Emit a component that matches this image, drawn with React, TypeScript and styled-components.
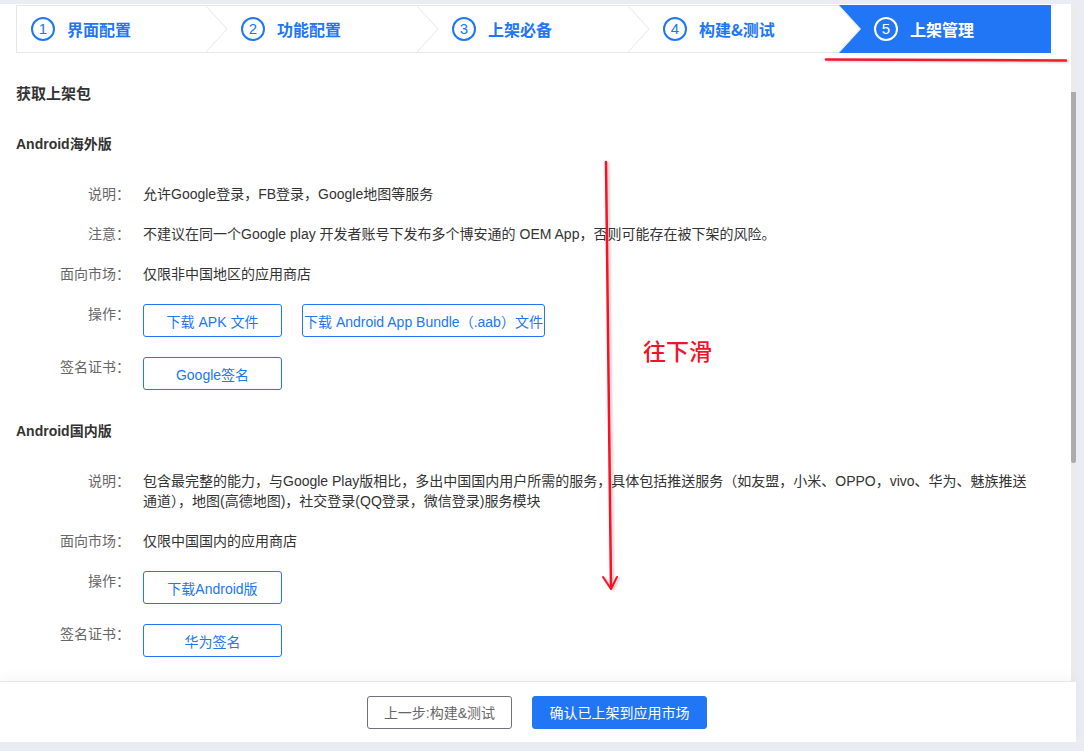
import React from 'react';
import styled, { createGlobalStyle } from 'styled-components';

const BLUE = '#2176f6';

const GlobalStyle = createGlobalStyle`
  html, body {
    margin: 0;
    padding: 0;
    background: #e9edf3;
  }
  body {
    font-family: "Liberation Sans", "Noto Sans CJK SC", sans-serif;
    color: #333;
  }
  * {
    box-sizing: border-box;
  }
`;

const Page = styled.div`
  width: 1076px;
  padding-top: 4px;
`;

const Body = styled.div`
  display: flex;
  height: 677px;
`;

const Panel = styled.div`
  position: relative;
  flex: 1;
  background: #fff;
  overflow: hidden;
  padding-top: 1px;
`;

const ScrollTrack = styled.div`
  width: 5px;
  background: #ebebeb;
  padding-top: 88px;
`;

const Thumb = styled.div`
  width: 5px;
  height: 371px;
  background: #acacac;
  border-radius: 0 0 2px 2px;
`;

const StepsBar = styled.div`
  display: flex;
  height: 48px;
  margin: 0 20px 0 16px;
  border: 1px solid #e4e7ed;
`;

const Step = styled.div<{ $active?: boolean; $first?: boolean }>`
  position: relative;
  display: flex;
  align-items: center;
  flex: ${(p) => (p.$active ? '1' : '0 0 211px')};
  padding-left: ${(p) => (p.$first ? 14 : 13)}px;
  padding-bottom: 1px;
  color: ${BLUE};

  ${(p) =>
    p.$active &&
    `
    margin: -1px -1px -1px -22px;
    padding-left: 35px;
    background: ${BLUE};
    color: #fff;
    clip-path: polygon(0 0, 100% 0, 100% 100%, 0 100%, 22px 50%);
  `}
`;

const Chevron = styled.svg`
  position: absolute;
  right: 0;
  top: 0;
  width: 22px;
  height: 100%;
`;

const StepNum = styled.span`
  width: 24px;
  height: 24px;
  border-radius: 50%;
  border: 2px solid currentColor;
  display: flex;
  align-items: center;
  justify-content: center;
  font-size: 15px;
  line-height: 1;
`;

const StepLabel = styled.span`
  margin-left: 12px;
  font-size: 16px;
  font-weight: 600;
  font-family: "Noto Sans CJK SC", "Liberation Sans", sans-serif;
`;

const Content = styled.div`
  padding: 31px 36px 0 0;
`;

const PageTitle = styled.div`
  padding-left: 16px;
  font-size: 15px;
  font-weight: 700;
  line-height: 20px;
  color: #333;
  margin-bottom: 30px;
`;

const Section = styled.div`
  padding-bottom: 11px;
`;

const SectionTitle = styled.div`
  padding-left: 16px;
  font-size: 14px;
  font-weight: 700;
  line-height: 20px;
  color: #333;
  margin-bottom: 30px;
`;

const Row = styled.div`
  display: flex;
  align-items: flex-start;
  margin-bottom: 20px;
  font-size: 14px;
  line-height: 20px;
`;

const Label = styled.div`
  flex: 0 0 130px;
  text-align: right;
  color: #666;
`;

const Value = styled.div`
  flex: 1;
  margin-left: 13px;
  color: #333;
`;

const ButtonGroup = styled.div`
  display: flex;
  gap: 20px;
`;

const OutlineButton = styled.button`
  height: 33px;
  min-width: 139px;
  padding: 0 1px;
  border: 1px solid ${BLUE};
  border-radius: 3px;
  background: #fff;
  color: ${BLUE};
  font-family: inherit;
  font-size: 14px;
  cursor: pointer;
`;

const Footer = styled.div`
  position: relative;
  z-index: 1;
  height: 60px;
  margin-top: 1px;
  background: #fff;
  display: flex;
  align-items: center;
  justify-content: center;
  gap: 20px;
  padding-right: 2px;
  box-shadow: 0 -5px 12px rgba(0, 0, 0, 0.035);
`;

const FooterButton = styled.button<{ $primary?: boolean }>`
  height: 33px;
  padding: 0 16px;
  border-radius: 3px;
  font-family: inherit;
  font-size: 14px;
  cursor: pointer;
  border: 1px solid ${(p) => (p.$primary ? BLUE : '#6f7278')};
  background: ${(p) => (p.$primary ? BLUE : '#fff')};
  color: ${(p) => (p.$primary ? '#fff' : '#666')};
  min-width: ${(p) => (p.$primary ? '175px' : '143px')};
`;

const Annotations = styled.svg`
  position: absolute;
  left: 0;
  top: 0;
  width: 1071px;
  height: 677px;
  pointer-events: none;
  z-index: 2;
  filter: drop-shadow(2px 1px 1px rgba(0, 0, 0, 0.2));
`;

const Hint = styled.div`
  position: absolute;
  left: 643px;
  top: 335px;
  z-index: 2;
  font-family: "Noto Sans CJK SC", sans-serif;
  font-size: 23px;
  font-weight: 500;
  line-height: 1;
  color: #f2132b;
`;

const steps = ['界面配置', '功能配置', '上架必备', '构建&测试', '上架管理'];

const App: React.FC = () => {
  return (
    <Page>
      <GlobalStyle />
      <Body>
        <Panel>
          <StepsBar>
            {steps.map((s, i) => {
              const active = i === steps.length - 1;
              return (
                <Step key={s} $active={active} $first={i === 0}>
                  <StepNum>{i + 1}</StepNum>
                  <StepLabel>{s}</StepLabel>
                  {!active && (
                    <Chevron viewBox="0 0 22 46" preserveAspectRatio="none">
                      <polyline points="0,0 21,23 0,46" fill="none" stroke="#e4e7ed" strokeWidth="1" />
                    </Chevron>
                  )}
                </Step>
              );
            })}
          </StepsBar>

          <Content>
            <PageTitle>获取上架包</PageTitle>

            <Section>
              <SectionTitle>Android海外版</SectionTitle>
              <Row>
                <Label>说明：</Label>
                <Value>允许Google登录，FB登录，Google地图等服务</Value>
              </Row>
              <Row>
                <Label>注意：</Label>
                <Value>不建议在同一个Google play 开发者账号下发布多个博安通的 OEM App，否则可能存在被下架的风险。</Value>
              </Row>
              <Row>
                <Label>面向市场：</Label>
                <Value>仅限非中国地区的应用商店</Value>
              </Row>
              <Row>
                <Label>操作：</Label>
                <Value>
                  <ButtonGroup>
                    <OutlineButton>下载 APK 文件</OutlineButton>
                    <OutlineButton>下载 Android App Bundle（.aab）文件</OutlineButton>
                  </ButtonGroup>
                </Value>
              </Row>
              <Row>
                <Label>签名证书：</Label>
                <Value>
                  <OutlineButton>Google签名</OutlineButton>
                </Value>
              </Row>
            </Section>

            <Section>
              <SectionTitle>Android国内版</SectionTitle>
              <Row>
                <Label>说明：</Label>
                <Value>
                  包含最完整的能力，与Google Play版相比，多出中国国内用户所需的服务，具体包括推送服务（如友盟，小米、OPPO，vivo、华为、魅族推送通道），地图(高德地图)，社交登录(QQ登录，微信登录)服务模块
                </Value>
              </Row>
              <Row>
                <Label>面向市场：</Label>
                <Value>仅限中国国内的应用商店</Value>
              </Row>
              <Row>
                <Label>操作：</Label>
                <Value>
                  <OutlineButton>下载Android版</OutlineButton>
                </Value>
              </Row>
              <Row>
                <Label>签名证书：</Label>
                <Value>
                  <OutlineButton>华为签名</OutlineButton>
                </Value>
              </Row>
            </Section>
          </Content>

          <Annotations viewBox="0 0 1071 677">
            <line x1="826" y1="55.5" x2="1066" y2="56.5" stroke="#ee1b2d" strokeWidth="2.5" strokeLinecap="round" />
            <line x1="606" y1="158" x2="611" y2="584" stroke="#ff0d22" strokeWidth="2.5" strokeLinecap="round" />
            <polyline points="603,573 611,585 617,573" fill="none" stroke="#ff0d22" strokeWidth="2" strokeLinecap="round" strokeLinejoin="round" />
          </Annotations>
          <Hint>往下滑</Hint>
        </Panel>
        <ScrollTrack>
          <Thumb />
        </ScrollTrack>
      </Body>

      <Footer>
        <FooterButton>上一步:构建&amp;测试</FooterButton>
        <FooterButton $primary>确认已上架到应用市场</FooterButton>
      </Footer>
    </Page>
  );
};

export default App;
